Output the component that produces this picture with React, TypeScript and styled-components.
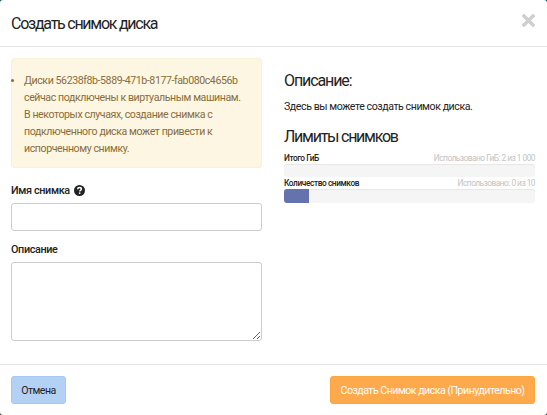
import React from "react";
import styled, { createGlobalStyle } from "styled-components";

const GlobalStyle = createGlobalStyle`
  html, body {
    margin: 0;
    padding: 0;
    height: 415px;
    overflow: hidden;
    background: linear-gradient(#0f5d63, #3a3a3a);
    font-family: "Roboto", "Liberation Sans", sans-serif;
  }
`;

const limits = [
  { name: "Итого ГиБ", used: "Использовано ГиБ: 2 из 1 000", percent: 0 },
  { name: "Количество снимков", used: "Использовано: 0 из 10", percent: 10 },
];

const App = () => {
  return (
    <>
      <GlobalStyle />
      <Modal>
        <Header>
          <Title>Создать снимок диска</Title>
          <Close aria-label="Закрыть">
            <svg width="13" height="13" viewBox="0 0 13 13">
              <path d="M2 2l9 9M11 2l-9 9" stroke="#cfcfcf" strokeWidth="3.4" strokeLinecap="square" />
            </svg>
          </Close>
        </Header>
        <Body>
          <LeftColumn>
            <Alert>
              <AlertList>
                <li>
                  Диски 56238f8b-5889-471b-8177-fab080c4656b сейчас подключены к виртуальным машинам.
                  В некоторых случаях, создание снимка с подключенного диска может привести к
                  испорченному снимку.
                </li>
              </AlertList>
            </Alert>
            <Field>
              <Label>
                Имя снимка
                <svg width="11" height="11" viewBox="0 0 11 11">
                  <circle cx="5.5" cy="5.5" r="5.5" fill="#222" />
                  <path d="M3.6 4.3c.1-1.2.9-1.8 1.9-1.8s1.9.6 1.9 1.5c0 1.3-1.6 1.3-1.7 2.4" fill="none" stroke="#fff" strokeWidth="1.5" />
                  <rect x="4.9" y="7.4" width="1.5" height="1.5" fill="#fff" />
                </svg>
              </Label>
              <TextInput type="text" />
            </Field>
            <Field>
              <Label>Описание</Label>
              <TextArea />
            </Field>
          </LeftColumn>
          <RightColumn>
            <SubTitle>Описание:</SubTitle>
            <HelpText>Здесь вы можете создать снимок диска.</HelpText>
            <LimitsTitle>Лимиты снимков</LimitsTitle>
            {limits.map((limit) => (
              <Limit key={limit.name}>
                <LimitHead>
                  <LimitName>{limit.name}</LimitName>
                  <LimitUsed>{limit.used}</LimitUsed>
                </LimitHead>
                <Track>
                  <Fill style={{ width: `${limit.percent}%` }} />
                </Track>
              </Limit>
            ))}
          </RightColumn>
        </Body>
        <Footer>
          <CancelButton>Отмена</CancelButton>
          <SubmitButton>Создать Снимок диска (Принудительно)</SubmitButton>
        </Footer>
      </Modal>
    </>
  );
};

export default App;

const Modal = styled.div`
  width: 547px;
  height: 415px;
  display: flex;
  flex-direction: column;
  background: #ffffff;
  color: #1f1f1f;
  border-radius: 3px;
  overflow: hidden;
`;

const Header = styled.header`
  height: 47px;
  box-sizing: border-box;
  flex-shrink: 0;
  display: flex;
  justify-content: space-between;
  align-items: center;
  padding: 0 12px 0 11px;
  border-bottom: 1px solid #e5e5e5;
`;

const Title = styled.h4`
  margin: 0;
  font-size: 16px;
  font-weight: 400;
  letter-spacing: -1.25px;
  color: #222222;
`;

const Close = styled.span`
  display: flex;
  margin-top: -6px;
`;

const Body = styled.div`
  flex: 1;
  display: grid;
  grid-template-columns: 251px 251px;
  column-gap: 22px;
  padding: 11px 12px 0 11px;
`;

const LeftColumn = styled.div`
  display: flex;
  flex-direction: column;
`;

const Alert = styled.div`
  height: 110px;
  box-sizing: border-box;
  padding: 13px 18px 0 12px;
  background: #fcf6e2;
  border: 1px solid #faefd8;
  border-radius: 3px;
  color: #8a6d3b;
  font-size: 10.6px;
  letter-spacing: -0.42px;
  line-height: 17px;
`;

const AlertList = styled.ul`
  margin: 0;
  padding: 0;
  list-style-position: outside;
  font-size: inherit;

  li::marker {
    font-size: 10px;
  }
`;

const Field = styled.div`
  display: flex;
  flex-direction: column;
  margin-top: 15px;

  & + & {
    margin-top: 11px;
  }
`;

const Label = styled.label`
  display: flex;
  align-items: center;
  gap: 4px;
  height: 14px;
  margin-bottom: 6px;
  font-size: 10.8px;
  font-weight: 500;
  letter-spacing: -0.35px;
  color: #222222;
`;

const TextInput = styled.input`
  box-sizing: border-box;
  width: 100%;
  height: 28px;
  margin: 0;
  border: 1px solid #cccccc;
  border-radius: 3px;
  background: #ffffff;
  outline: none;
`;

const TextArea = styled.textarea`
  box-sizing: border-box;
  display: block;
  width: 100%;
  height: 79px;
  margin: 0;
  border: 1px solid #cccccc;
  border-radius: 3px;
  background: #ffffff;
  outline: none;
`;

const RightColumn = styled.div`
  display: flex;
  flex-direction: column;
  padding-top: 12px;
`;

const SubTitle = styled.h4`
  margin: 0;
  height: 22px;
  line-height: 22px;
  font-size: 16px;
  font-weight: 400;
  letter-spacing: -1.1px;
  color: #222222;
`;

const HelpText = styled.p`
  margin: 8px 0 0;
  height: 14px;
  line-height: 14px;
  font-size: 10.6px;
  letter-spacing: -0.43px;
  color: #222222;
`;

const LimitsTitle = styled.h4`
  margin: 12px 0 0;
  height: 22px;
  line-height: 22px;
  font-size: 16px;
  font-weight: 400;
  letter-spacing: -1.25px;
  color: #222222;
`;

const Limit = styled.div`
  margin-top: 4px;

  & + & {
    margin-top: 0;
  }
`;

const LimitHead = styled.div`
  display: flex;
  justify-content: space-between;
  align-items: center;
  height: 12px;
  line-height: 12px;
`;

const LimitName = styled.span`
  font-size: 8.3px;
  font-weight: 500;
  letter-spacing: -0.4px;
  color: #222222;
`;

const LimitUsed = styled.span`
  font-size: 8.3px;
  letter-spacing: -0.5px;
  color: #c2c2c2;
`;

const Track = styled.div`
  height: 13px;
  background: #f5f5f5;
  border-radius: 3px;
  box-shadow: inset 0 1px 1px rgba(0, 0, 0, 0.06);
  overflow: hidden;

  ${Limit}:last-child & {
    height: 14px;
  }
`;

const Fill = styled.div`
  height: 100%;
  background: #6672ae;
`;

const Footer = styled.footer`
  height: 51px;
  box-sizing: border-box;
  flex-shrink: 0;
  display: flex;
  justify-content: space-between;
  align-items: flex-start;
  padding: 11px 12px 0 11px;
  border-top: 1px solid #e5e5e5;
`;

const CancelButton = styled.button`
  width: 55px;
  height: 28px;
  padding: 0;
  border: 1px solid #a6c8f2;
  border-radius: 3px;
  background: #b3d1f5;
  color: #222222;
  font-family: inherit;
  font-size: 10.6px;
  letter-spacing: -0.5px;
`;

const SubmitButton = styled.button`
  width: 205px;
  height: 28px;
  padding: 0;
  border: 1px solid #fba63f;
  border-radius: 3px;
  background: #ffa94d;
  color: #ffffff;
  font-family: inherit;
  font-size: 10.6px;
  letter-spacing: -0.5px;
`;
